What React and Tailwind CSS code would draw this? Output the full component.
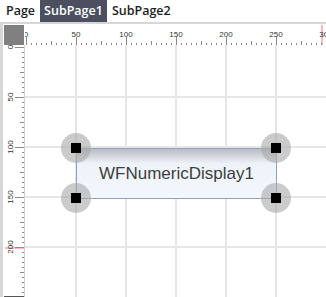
const ticks = Array.from({ length: 61 }, (_, i) => i * 5);

function TopRuler() {
	return (
		<svg width="301" height="20" className="block">
			<line x1="297" y1="0" x2="297" y2="20" stroke="#f3a3a3" strokeWidth="1.5" />
			{ticks.map((u) => {
				const x = 1.5 + u;
				const len = u % 50 === 0 ? 8 : u % 25 === 0 ? 4 : 2;
				return <line key={u} x1={x} y1={20 - len} x2={x} y2={20} stroke="#8a8a8a" strokeWidth="1" />;
			})}
			{ticks
				.filter((u) => u % 50 === 0)
				.map((u) => (
					<text
						key={u}
						x={1 + u}
						y="11.5"
						textAnchor="middle"
						fontSize="8"
						fill="#333"
						fontFamily="'Liberation Sans', sans-serif"
					>
						{u}
					</text>
				))}
		</svg>
	);
}

function LeftRuler() {
	return (
		<svg width="20" height="252" className="block">
			<line x1="1" y1="203" x2="20" y2="203" stroke="#f3a3a3" strokeWidth="1.5" />
			{ticks.slice(0, 51).map((u) => {
				const y = 2.5 + u;
				const len = u % 50 === 0 ? 9 : u % 25 === 0 ? 4 : 2;
				return <line key={u} x1={20 - len} y1={y} x2={20} y2={y} stroke="#8a8a8a" strokeWidth="1" />;
			})}
			{ticks
				.filter((u) => u % 50 === 0 && u <= 200)
				.map((u) => (
					<text
						key={u}
						x="0"
						y="0"
						transform={`translate(8.5 ${2 + u}) rotate(-90)`}
						textAnchor="middle"
						fontSize="8"
						fill="#333"
						fontFamily="'Liberation Sans', sans-serif"
					>
						{u}
					</text>
				))}
			<line x1="0" y1="251.5" x2="20" y2="251.5" stroke="#555" strokeWidth="1" />
		</svg>
	);
}

function Grid() {
	const xs = [51, 101, 151, 201, 251];
	const ys = [52, 102, 152, 202];
	return (
		<svg width="301" height="252" className="absolute left-0 top-0">
			{xs.map((x) => (
				<line key={x} x1={x} y1="0" x2={x} y2="252" stroke="#e6e6e6" strokeWidth="2" />
			))}
			{ys.map((y) => (
				<line key={y} x1="0" y1={y} x2="301" y2={y} stroke="#e6e6e6" strokeWidth="2" />
			))}
		</svg>
	);
}

function Handle({ className }) {
	return (
		<div className={`absolute w-[30px] h-[30px] rounded-full bg-[#a8a8a8]/60 flex items-center justify-center ${className}`}>
			<div className="w-[10px] h-[10px] bg-black" />
		</div>
	);
}

export default function App() {
	return (
		<div className="w-[326px] h-[297px] bg-white overflow-hidden">
			<div className="h-[22px] flex items-stretch text-[12.5px] font-semibold font-['Open_Sans',sans-serif] text-[#1e1e1e]">
				<span className="pl-[6px] pr-[5px] flex items-center">Page</span>
				<span className="px-[4px] flex items-center bg-[#4b4f5f] text-white">SubPage1</span>
				<span className="px-[5px] flex items-center">SubPage2</span>
			</div>
			<div className="border-t-2 border-l-[3px] border-[#d7d7d7] pt-px pl-px">
				<div className="grid grid-cols-[21px_1fr] grid-rows-[20px_252px]">
					<div className="bg-[#808080] w-[20px]" />
					<TopRuler />
					<div className="border-r border-[#cfcfcf] w-[21px]">
						<LeftRuler />
					</div>
					<div className="relative">
						<Grid />
						<div className="absolute left-[51px] top-[103px] w-[201px] h-[51px] border border-[#8ea3c2] bg-gradient-to-b from-[#b9bdc3] via-[#eef3fa] via-30% to-[#f3f7fd] flex items-center justify-center">
							<span className="text-[17px] text-[#3d3d3d] font-['Liberation_Sans',sans-serif]">WFNumericDisplay1</span>
						</div>
						<Handle className="left-[36px] top-[88px]" />
						<Handle className="left-[236px] top-[88px]" />
						<Handle className="left-[36px] top-[138px]" />
						<Handle className="left-[236px] top-[138px]" />
					</div>
				</div>
			</div>
		</div>
	);
}
